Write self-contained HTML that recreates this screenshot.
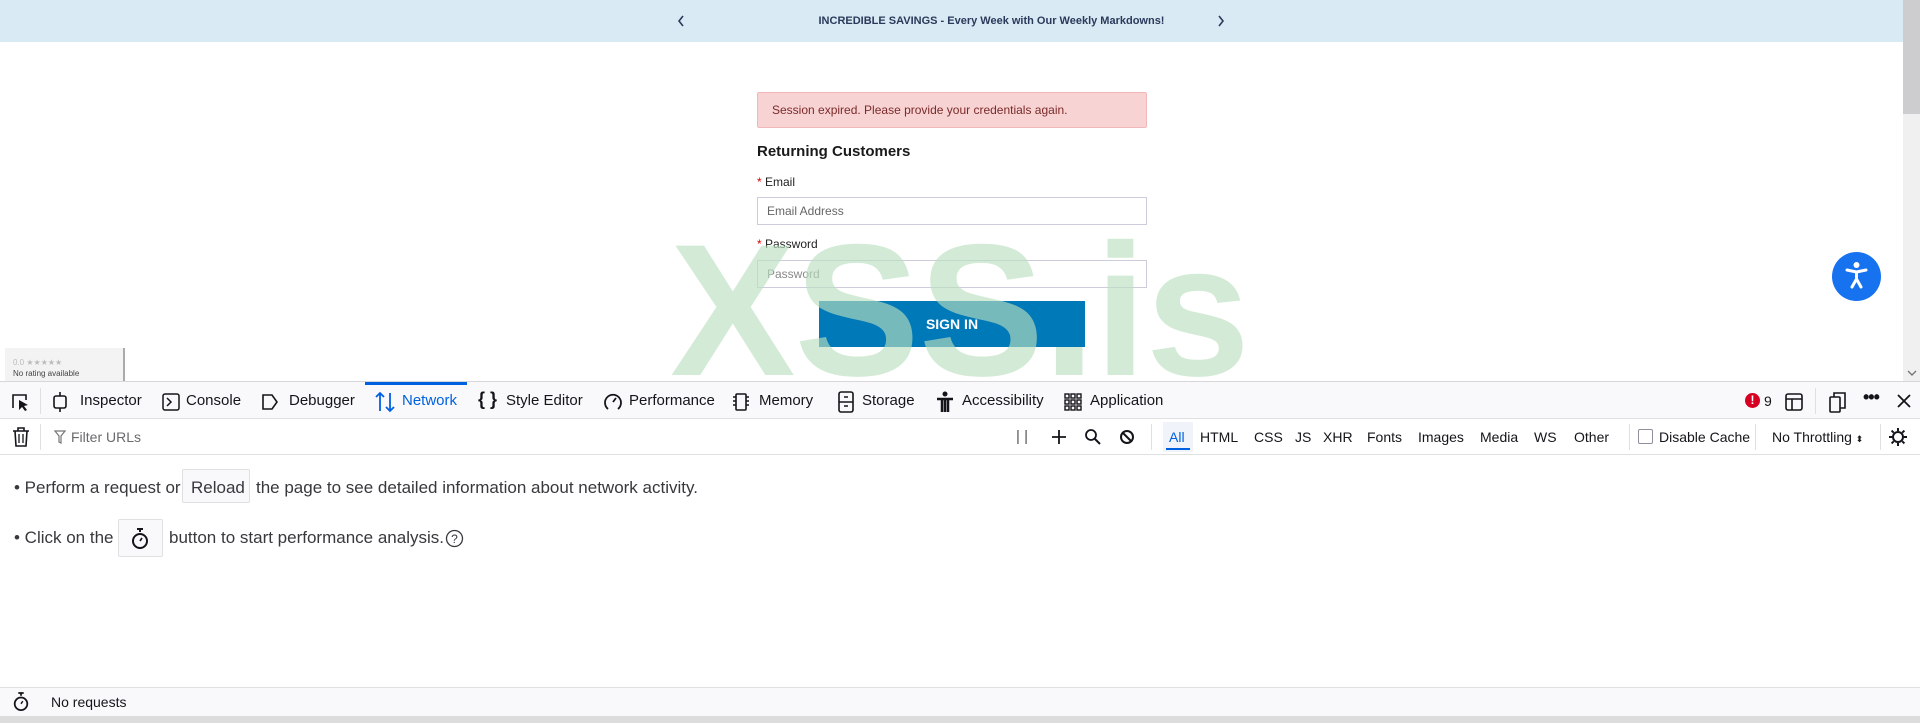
<!DOCTYPE html>
<html><head><meta charset="utf-8"><style>
*{margin:0;padding:0;box-sizing:border-box}
body{width:1920px;height:723px;overflow:hidden;background:#fff;font-family:"Liberation Sans",sans-serif;position:relative}
.a{position:absolute}
.t{position:absolute;font-size:15px;color:#15141a;white-space:nowrap}
svg{position:absolute}
.sep{position:absolute;width:1px;background:#e0e0e2}
</style></head><body>
<!-- banner -->
<div class="a" style="left:0;top:0;width:1903px;height:42px;background:#d9eaf4"></div>
<div class="a" style="left:0;top:0;width:1903px;height:42px;line-height:42px;text-align:center;font-size:11px;font-weight:bold;color:#2a3a5a;padding-left:80px">INCREDIBLE SAVINGS - Every Week with Our Weekly Markdowns!</div>
<svg style="left:676px;top:14px" width="10" height="14"><path d="M7 2 L3 7 L7 12" stroke="#2a3a5a" stroke-width="1.6" fill="none"/></svg>
<svg style="left:1216px;top:14px" width="10" height="14"><path d="M3 2 L7 7 L3 12" stroke="#2a3a5a" stroke-width="1.6" fill="none"/></svg>
<!-- scrollbar -->
<div class="a" style="left:1903px;top:0;width:17px;height:381px;background:#f0f0f0"></div>
<div class="a" style="left:1903px;top:0;width:17px;height:114px;background:#cdcdcf"></div>
<svg style="left:1906px;top:369px" width="12" height="8"><path d="M2 2 L6 6 L10 2" stroke="#777" stroke-width="1.4" fill="none"/></svg>
<!-- form -->
<div class="a" style="left:757px;top:92px;width:390px;height:36px;background:#f8d3d3;border:1px solid #f0b8b8;border-radius:2px"></div>
<div class="a" style="left:772px;top:92px;line-height:36px;font-size:12px;color:#7a2a2a">Session expired. Please provide your credentials again.</div>
<div class="a" style="left:757px;top:143px;font-size:15px;font-weight:bold;color:#1a1a1a">Returning Customers</div>
<div class="a" style="left:757px;top:175px;font-size:12px;color:#222"><span style="color:#d00">*</span> Email</div>
<div class="a" style="left:757px;top:197px;width:390px;height:28px;border:1px solid #ccd;"></div>
<div class="a" style="left:767px;top:197px;line-height:28px;font-size:12px;color:#666">Email Address</div>
<div class="a" style="left:757px;top:237px;font-size:12px;color:#222"><span style="color:#d00">*</span> Password</div>
<div class="a" style="left:757px;top:260px;width:390px;height:28px;border:1px solid #ccd;"></div>
<div class="a" style="left:767px;top:260px;line-height:28px;font-size:12px;color:#888">Password</div>
<div class="a" style="left:819px;top:301px;width:266px;height:46px;background:#0079b8;color:#fff;font-weight:bold;font-size:14px;text-align:center;line-height:46px">SIGN IN</div>
<!-- watermark -->
<div class="a" style="left:670px;top:216px;font-size:188px;line-height:1;font-weight:bold;color:rgba(186,223,191,0.64);letter-spacing:-1px">XSS.is</div>
<!-- accessibility -->
<div class="a" style="left:1832px;top:252px;width:49px;height:49px;border-radius:50%;background:#1672ef"></div>
<svg style="left:1840px;top:260px" width="33" height="33" viewBox="0 0 33 33"><circle cx="16.5" cy="5" r="3" fill="#fff"/><path d="M7 10 L16.5 12 L26 10 M16.5 12 L16.5 19 L12 27 M16.5 19 L21 27" stroke="#fff" stroke-width="3" fill="none" stroke-linecap="round" stroke-linejoin="round"/></svg>
<!-- rating -->
<div class="a" style="left:5px;top:348px;width:120px;height:34px;background:#f3f3f3;border-right:2px solid #aaa"></div>
<div class="a" style="left:13px;top:358px;font-size:8px;color:#bbb">0.0 ★★★★★</div>
<div class="a" style="left:13px;top:369px;font-size:8px;color:#444">No rating available</div>
<!-- devtools -->
<div class="a" style="left:0;top:381px;width:1920px;height:342px;background:#fff;border-top:1px solid #d7d7db"></div>
<div class="a" style="left:0;top:382px;width:1920px;height:37px;background:#f9f9fb;border-bottom:1px solid #e0e0e2"></div>
<div class="a" style="left:365px;top:382px;width:102px;height:3px;background:#0061e0"></div>
<svg style="left:10px;top:392px" width="20" height="20" viewBox="0 0 20 20"><path d="M3 16 V3 H16 V8" stroke="#15141a" stroke-width="1.6" fill="none"/><path d="M9 8 L9 18 L12 15 L15 19 L17 18 L14 14 L18 13 Z" fill="#15141a"/></svg>
<div class="sep" style="left:40px;top:388px;height:26px"></div>
<svg style="left:51px;top:392px" width="18" height="20" viewBox="0 0 18 20"><rect x="3" y="4" width="12" height="12" rx="2" stroke="#15141a" stroke-width="1.6" fill="none"/><path d="M9 0V4M9 16V20" stroke="#15141a" stroke-width="1.6"/></svg>
<div class="t" style="left:80px;top:392px">Inspector</div>
<svg style="left:162px;top:393px" width="18" height="18" viewBox="0 0 18 18"><rect x="1" y="1" width="16" height="16" rx="2" stroke="#15141a" stroke-width="1.5" fill="none"/><path d="M5 5 L9 9 L5 13" stroke="#15141a" stroke-width="1.5" fill="none"/></svg>
<div class="t" style="left:186px;top:392px">Console</div>
<svg style="left:261px;top:393px" width="18" height="18" viewBox="0 0 18 18"><path d="M2 2 H11 L16 9 L11 16 H2 Z" stroke="#15141a" stroke-width="1.6" fill="none"/></svg>
<div class="t" style="left:289px;top:392px">Debugger</div>
<svg style="left:374px;top:391px" width="22" height="22" viewBox="0 0 22 22"><path d="M6 20 V2 M2 6 L6 2 L10 6 M16 2 V20 M12 16 L16 20 L20 16" stroke="#0061e0" stroke-width="1.8" fill="none"/></svg>
<div class="t" style="left:402px;top:392px;color:#0061e0">Network</div>
<div class="t" style="left:478px;top:389px;font-size:18px;font-weight:bold">{ }</div>
<div class="t" style="left:506px;top:392px">Style Editor</div>
<svg style="left:603px;top:392px" width="20" height="20" viewBox="0 0 20 20"><path d="M5 17 A8 8 0 1 1 15 17" stroke="#15141a" stroke-width="1.8" fill="none"/><path d="M10 10 L13 6" stroke="#15141a" stroke-width="1.8"/></svg>
<div class="t" style="left:629px;top:392px">Performance</div>
<svg style="left:731px;top:392px" width="20" height="20" viewBox="0 0 20 20"><rect x="5" y="2" width="10" height="16" rx="1" stroke="#15141a" stroke-width="1.6" fill="none"/><path d="M2 5H5M2 9H5M2 13H5M15 5H18M15 9H18M15 13H18" stroke="#15141a" stroke-width="1.4"/></svg>
<div class="t" style="left:759px;top:392px">Memory</div>
<svg style="left:837px;top:391px" width="18" height="22" viewBox="0 0 18 22"><rect x="2" y="1" width="14" height="20" rx="2" stroke="#15141a" stroke-width="1.6" fill="none"/><path d="M2 11H16M7 6H11M7 15H11" stroke="#15141a" stroke-width="1.6"/></svg>
<div class="t" style="left:862px;top:392px">Storage</div>
<svg style="left:935px;top:391px" width="20" height="22" viewBox="0 0 20 22"><circle cx="10" cy="3" r="2.5" fill="#15141a"/><path d="M2 8 H18 M10 8 V21 M7 9 V21 M13 9 V21" stroke="#15141a" stroke-width="2.5"/></svg>
<div class="t" style="left:962px;top:392px">Accessibility</div>
<svg style="left:1064px;top:393px" width="18" height="18" viewBox="0 0 18 18" fill="none" stroke="#15141a" stroke-width="1.4"><rect x="1" y="1" width="4" height="4"/><rect x="7" y="1" width="4" height="4"/><rect x="13" y="1" width="4" height="4"/><rect x="1" y="7" width="4" height="4"/><rect x="7" y="7" width="4" height="4"/><rect x="13" y="7" width="4" height="4"/><rect x="1" y="13" width="4" height="4"/><rect x="7" y="13" width="4" height="4"/><rect x="13" y="13" width="4" height="4"/></svg>
<div class="t" style="left:1090px;top:392px">Application</div>
<div class="a" style="left:1745px;top:393px;width:15px;height:15px;border-radius:50%;background:#d70022;color:#fff;font-size:12px;font-weight:bold;text-align:center;line-height:15px">!</div>
<div class="t" style="left:1764px;top:393px;font-size:14px">9</div>
<svg style="left:1784px;top:392px" width="20" height="20" viewBox="0 0 20 20"><rect x="2" y="2" width="16" height="16" rx="2" stroke="#15141a" stroke-width="1.6" fill="none"/><path d="M2 7H18M8 7V18" stroke="#15141a" stroke-width="1.6"/></svg>
<div class="sep" style="left:1815px;top:388px;height:26px"></div>
<svg style="left:1828px;top:391px" width="20" height="22" viewBox="0 0 20 22"><rect x="2" y="6" width="10" height="15" rx="1" stroke="#15141a" stroke-width="1.6" fill="none"/><path d="M6 6V2H17V17H12" stroke="#15141a" stroke-width="1.6" fill="none"/></svg>
<div class="t" style="left:1863px;top:387px;font-size:18px;font-weight:bold;letter-spacing:-1px">•••</div>
<svg style="left:1896px;top:393px" width="16" height="16"><path d="M2 2L14 14M14 2L2 14" stroke="#15141a" stroke-width="1.8"/></svg>
<!-- row2 -->
<div class="a" style="left:0;top:419px;width:1920px;height:36px;background:#fff;border-bottom:1px solid #e0e0e2"></div>
<svg style="left:12px;top:427px" width="18" height="20" viewBox="0 0 18 20"><path d="M1 4H17M6 4V1H12V4" stroke="#15141a" stroke-width="1.6" fill="none"/><path d="M3 4 L4 19 H14 L15 4" stroke="#15141a" stroke-width="1.6" fill="none"/><path d="M7 7V16M11 7V16" stroke="#15141a" stroke-width="1.3"/></svg>
<div class="sep" style="left:40px;top:424px;height:26px"></div>
<svg style="left:54px;top:430px" width="12" height="14" viewBox="0 0 12 14"><path d="M1 1H11L7 6V13L5 12V6Z" stroke="#777" stroke-width="1.2" fill="none"/></svg>
<div class="t" style="left:71px;top:429px;font-size:14px;color:#6a6a6d">Filter URLs</div>
<div class="t" style="left:1016px;top:428px;color:#555">| |</div>
<svg style="left:1051px;top:429px" width="16" height="16"><path d="M8 1V15M1 8H15" stroke="#15141a" stroke-width="1.8"/></svg>
<svg style="left:1084px;top:428px" width="18" height="18"><circle cx="7" cy="7" r="5" stroke="#15141a" stroke-width="1.8" fill="none"/><path d="M11 11L16 16" stroke="#15141a" stroke-width="2"/></svg>
<svg style="left:1119px;top:429px" width="16" height="16"><circle cx="8" cy="8" r="6" stroke="#15141a" stroke-width="2" fill="none"/><path d="M4 4L12 12" stroke="#15141a" stroke-width="2"/></svg>
<div class="sep" style="left:1151px;top:424px;height:26px"></div>
<div class="a" style="left:1163px;top:422px;width:30px;height:30px;background:#f0f4fa"></div>
<div class="a" style="left:1166px;top:448px;width:24px;height:2px;background:#0061e0"></div>
<div class="t" style="left:1169px;top:429px;font-size:14px;color:#0061e0">All</div>
<div class="t" style="left:1200px;top:429px;font-size:14px">HTML</div>
<div class="t" style="left:1254px;top:429px;font-size:14px">CSS</div>
<div class="t" style="left:1295px;top:429px;font-size:14px">JS</div>
<div class="t" style="left:1323px;top:429px;font-size:14px">XHR</div>
<div class="t" style="left:1367px;top:429px;font-size:14px">Fonts</div>
<div class="t" style="left:1418px;top:429px;font-size:14px">Images</div>
<div class="t" style="left:1480px;top:429px;font-size:14px">Media</div>
<div class="t" style="left:1534px;top:429px;font-size:14px">WS</div>
<div class="t" style="left:1574px;top:429px;font-size:14px">Other</div>
<div class="sep" style="left:1629px;top:424px;height:26px"></div>
<div class="a" style="left:1638px;top:429px;width:15px;height:15px;border:1px solid #8f8f9d;border-radius:2px"></div>
<div class="t" style="left:1659px;top:429px;font-size:14px">Disable Cache</div>
<div class="sep" style="left:1755px;top:424px;height:26px"></div>
<div class="t" style="left:1772px;top:429px;font-size:14px">No Throttling <span style="font-size:9px">⬍</span></div>
<div class="sep" style="left:1880px;top:424px;height:26px"></div>
<svg style="left:1888px;top:427px" width="20" height="20" viewBox="0 0 20 20"><circle cx="10" cy="10" r="5" stroke="#15141a" stroke-width="2" fill="none"/><path d="M10 1V4M10 16V19M1 10H4M16 10H19M3.6 3.6L5.7 5.7M14.3 14.3L16.4 16.4M3.6 16.4L5.7 14.3M14.3 5.7L16.4 3.6" stroke="#15141a" stroke-width="2"/></svg>
<!-- content -->
<div class="t" style="left:14px;top:478px;font-size:17px;color:#38383d">• Perform a request or</div>
<div class="a" style="left:182px;top:469px;width:68px;height:34px;background:#f9f9fb;border:1px solid #e0e0e2;border-radius:2px"></div>
<div class="t" style="left:191px;top:478px;font-size:17px;color:#38383d">Reload</div>
<div class="t" style="left:256px;top:478px;font-size:17px;color:#38383d">the page to see detailed information about network activity.</div>
<div class="t" style="left:14px;top:528px;font-size:17px;color:#38383d">• Click on the</div>
<div class="a" style="left:118px;top:519px;width:45px;height:38px;background:#f9f9fb;border:1px solid #e0e0e2;border-radius:2px"></div>
<svg style="left:130px;top:528px" width="20" height="22" viewBox="0 0 20 22"><path d="M7 1H13M10 1V4" stroke="#15141a" stroke-width="2"/><circle cx="10" cy="13" r="7" stroke="#15141a" stroke-width="2" fill="none"/><path d="M10 13L12 10" stroke="#15141a" stroke-width="1.6"/></svg>
<div class="t" style="left:169px;top:528px;font-size:17px;color:#38383d">button to start performance analysis.</div>
<svg style="left:445px;top:529px" width="19" height="19"><circle cx="9.5" cy="9.5" r="8" stroke="#38383d" stroke-width="1.3" fill="none"/><text x="9.5" y="14" text-anchor="middle" font-size="12" font-family="Liberation Sans" fill="#38383d">?</text></svg>
<!-- status -->
<div class="a" style="left:0;top:687px;width:1920px;height:30px;background:#f9f9fb;border-top:1px solid #e0e0e2"></div>
<svg style="left:12px;top:692px" width="18" height="20" viewBox="0 0 20 22"><path d="M7 1H13M10 1V4" stroke="#15141a" stroke-width="2"/><circle cx="10" cy="13" r="7" stroke="#15141a" stroke-width="2" fill="none"/><path d="M10 13L12 10" stroke="#15141a" stroke-width="1.6"/></svg>
<div class="t" style="left:51px;top:694px;font-size:14px;color:#15141a">No requests</div>
<div class="a" style="left:0;top:716px;width:1920px;height:7px;background:#dcdcdc"></div>
</body></html>
